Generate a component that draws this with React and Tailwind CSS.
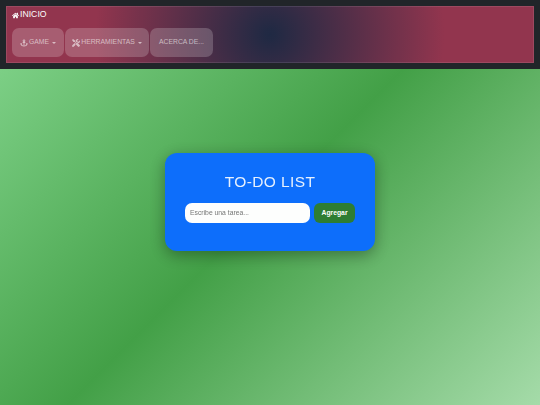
import { FaHome, FaTools, FaAnchor } from "react-icons/fa";

const NavButton = ({ icon, label, caret, className }) => (
  <button className={`flex h-[29px] items-center justify-center gap-px rounded-[7px] bg-white/20 text-[6.8px] text-white/60 ${className}`}>
    {icon}
    <span>{label}</span>
    {caret && <span className="ml-[2px] h-0 w-0 border-x-[2px] border-t-[2px] border-x-transparent border-t-white/60" />}
  </button>
);

export default function App() {
  return (
    <div className="min-h-screen overflow-hidden bg-[linear-gradient(135deg,#86d790_0%,#43a047_50%,#a5dba9_100%)] font-['Liberation_Sans',Arial,sans-serif]">
      <header className="h-[69px] bg-[#212529] px-[6px] pt-[6px]">
        <nav className="h-[57px] border border-white/10 bg-[radial-gradient(circle_at_center,#1f2a44_0%,#94364f_66%)] pl-[5px] opacity-[0.99]">
          <a className="flex h-[14px] items-center gap-px text-[8.7px] leading-none text-white">
            <FaHome className="mt-[2px] size-[7px]" />
            INICIO
          </a>
          <div className="mt-[7px] flex gap-px">
            <NavButton className="w-[52px]" icon={<FaAnchor className="size-[8px]" />} label="GAME" caret />
            <NavButton className="w-[84px]" icon={<FaTools className="size-[8px]" />} label="HERRAMIENTAS" caret />
            <NavButton className="w-[63px]" label="ACERCA DE..." />
          </div>
        </nav>
      </header>
      <main className="flex justify-center pt-[84px]">
        <section className="h-[98px] w-[210px] rounded-[12px] bg-[#0d6efd] px-[20px] pt-[20px] opacity-[0.99] shadow-[0_4px_16px_rgba(0,0,0,0.35)]">
          <h1 className="text-center text-[15.5px] leading-[18px] tracking-[0.4px] text-[#e8f1ff]">TO-DO LIST</h1>
          <form className="mt-[12px] flex gap-[4px]">
            <input
              className="h-[20px] w-[125px] rounded-[7px] bg-white px-[5px] pb-px text-[6.8px] text-black outline-none placeholder:text-[#777]"
              placeholder="Escribe una tarea..."
            />
            <button type="button" className="h-[20px] w-[41px] rounded-[6px] bg-[#2e7d32] text-[6.8px] font-bold text-white">
              Agregar
            </button>
          </form>
        </section>
      </main>
    </div>
  );
}
